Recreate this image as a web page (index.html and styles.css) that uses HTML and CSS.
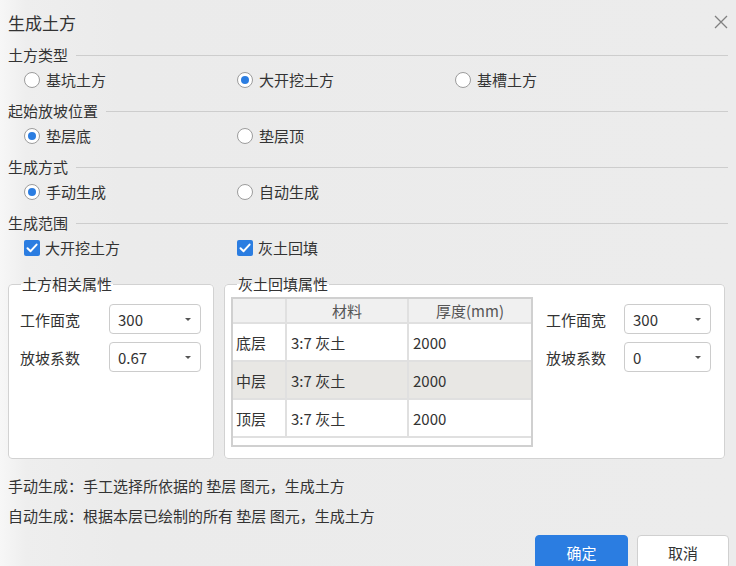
FILE: index.html
```html
<!DOCTYPE html>
<html lang="zh-CN">
<head>
<meta charset="utf-8">
<title>生成土方</title>
<link rel="stylesheet" href="styles.css">
</head>
<body>
<div class="dialog">
  <div class="titlebar">
    <span class="title">生成土方</span>
    <svg class="close" width="14" height="14" viewBox="0 0 14 14"><path d="M1 1 L13 13 M13 1 L1 13" stroke="#808080" stroke-width="1.3" fill="none"/></svg>
  </div>

  <section class="sec">
    <div class="sec-head"><span>土方类型</span><i class="rule"></i></div>
    <div class="opts">
      <label class="opt"><span class="radio"></span>基坑土方</label>
      <label class="opt"><span class="radio on"></span>大开挖土方</label>
      <label class="opt"><span class="radio"></span>基槽土方</label>
    </div>
  </section>

  <section class="sec">
    <div class="sec-head"><span>起始放坡位置</span><i class="rule"></i></div>
    <div class="opts">
      <label class="opt"><span class="radio on"></span>垫层底</label>
      <label class="opt"><span class="radio"></span>垫层顶</label>
    </div>
  </section>

  <section class="sec">
    <div class="sec-head"><span>生成方式</span><i class="rule"></i></div>
    <div class="opts">
      <label class="opt"><span class="radio on"></span>手动生成</label>
      <label class="opt"><span class="radio"></span>自动生成</label>
    </div>
  </section>

  <section class="sec">
    <div class="sec-head"><span>生成范围</span><i class="rule"></i></div>
    <div class="opts">
      <label class="opt opt-chk"><span class="check"><svg width="16" height="16" viewBox="0 0 16 16"><path d="M3.5 8.2 L6.6 11.2 L12.6 4.6" stroke="#fff" stroke-width="2" fill="none" stroke-linecap="round" stroke-linejoin="round"/></svg></span>大开挖土方</label>
      <label class="opt opt-chk"><span class="check"><svg width="16" height="16" viewBox="0 0 16 16"><path d="M3.5 8.2 L6.6 11.2 L12.6 4.6" stroke="#fff" stroke-width="2" fill="none" stroke-linecap="round" stroke-linejoin="round"/></svg></span>灰土回填</label>
    </div>
  </section>

  <div class="groups">
    <fieldset class="grp grp-left">
      <legend>土方相关属性</legend>
      <div class="grp-body left-body">
        <div class="props">
          <div class="prop"><span class="plabel">工作面宽</span><div class="combo"><span>300</span><i class="caret"></i></div></div>
          <div class="prop"><span class="plabel">放坡系数</span><div class="combo"><span>0.67</span><i class="caret"></i></div></div>
        </div>
      </div>
    </fieldset>
    <fieldset class="grp grp-right">
      <legend>灰土回填属性</legend>
      <div class="grp-body right-body">
        <div class="tbl-wrap">
          <table class="tbl">
            <tr class="thead"><th class="c1"></th><th class="c2">材料</th><th class="c3">厚度(mm)</th></tr>
            <tr class="row"><td class="c1">底层</td><td class="c2">3:7 灰土</td><td class="c3">2000</td></tr>
            <tr class="row alt"><td class="c1">中层</td><td class="c2">3:7 灰土</td><td class="c3">2000</td></tr>
            <tr class="row"><td class="c1">顶层</td><td class="c2">3:7 灰土</td><td class="c3">2000</td></tr>
          </table>
        </div>
        <div class="props props-right">
          <div class="prop"><span class="plabel">工作面宽</span><div class="combo"><span>300</span><i class="caret"></i></div></div>
          <div class="prop"><span class="plabel">放坡系数</span><div class="combo"><span>0</span><i class="caret"></i></div></div>
        </div>
      </div>
    </fieldset>
  </div>

  <p class="note">手动生成：手工选择所依据的 垫层 图元，生成土方</p>
  <p class="note">自动生成：根据本层已绘制的所有 垫层 图元，生成土方</p>

  <div class="actions">
    <button class="btn primary">确定</button>
    <button class="btn">取消</button>
  </div>
</div>
</body>
</html>
```

FILE: styles.css
```css
* { box-sizing: border-box; }

html, body {
  margin: 0;
  padding: 0;
}

body {
  width: 736px;
  height: 566px;
  overflow: hidden;
  background: linear-gradient(90deg, #f7f7f7 0px, #eeeeee 26px, #ebebeb 120px, #ececec 100%);
  font-family: "Noto Sans CJK SC", "Noto Sans", sans-serif;
  font-size: 15px;
  color: #333;
}

.dialog {
  width: 736px;
}

.titlebar {
  height: 44px;
  padding: 0 8px;
  display: flex;
  align-items: center;
  justify-content: space-between;
}

.title {
  font-size: 17px;
  color: #333;
}

.close {
  display: block;
}

.sec {
  height: 56px;
}

.sec-head {
  height: 22px;
  margin: 0 8px;
  display: flex;
  align-items: center;
  line-height: 22px;
}

.rule {
  flex: 1;
  height: 1px;
  background: #cdcdcd;
  margin-left: 8px;
}

.opts {
  height: 28px;
  padding-left: 24px;
  display: grid;
  grid-template-columns: 213px 218px auto;
  align-items: center;
}

.opt {
  display: flex;
  align-items: center;
  line-height: 20px;
}

.radio {
  width: 16px;
  height: 16px;
  border-radius: 50%;
  border: 1px solid #9c9c9c;
  background: #fff;
  margin-right: 6px;
  display: flex;
  align-items: center;
  justify-content: center;
}

.radio.on::after {
  content: "";
  width: 8px;
  height: 8px;
  border-radius: 50%;
  background: #2b7de1;
}

.check {
  width: 16px;
  height: 16px;
  border-radius: 2px;
  background: #2b7de1;
  margin-right: 5px;
  display: block;
}

.check svg {
  display: block;
}

.groups {
  margin-top: 6px;
  height: 185px;
  padding-left: 8px;
  display: flex;
  gap: 10px;
}

.grp {
  margin: 0;
  padding: 0;
  border: 1px solid #d2d2d2;
  border-radius: 4px;
  background: #fff;
  min-width: 0;
}

.grp legend {
  font-size: 15px;
  line-height: 20px;
  margin-left: 12px;
  padding: 0 1px;
  color: #333;
}

.grp-left {
  width: 206px;
}

.grp-right {
  width: 501px;
}

.left-body {
  padding: 10px 12px 0 11px;
}

.right-body {
  padding: 3px 13px 0 6px;
  display: flex;
  align-items: flex-start;
}

.props {
  display: flex;
  flex-direction: column;
  gap: 8px;
}

.props-right {
  margin-left: 13px;
  padding-top: 7px;
}

.prop {
  display: flex;
  align-items: center;
  height: 30px;
}

.plabel {
  width: 89px;
}

.props-right .plabel {
  width: 78px;
}

.combo {
  width: 92px;
  height: 30px;
  border: 1px solid #cccccc;
  border-radius: 4px;
  background: #fff;
  display: flex;
  align-items: center;
  justify-content: space-between;
  padding: 0 9px 0 8px;
}

.props-right .combo {
  width: 87px;
}

.caret {
  width: 0;
  height: 0;
  border-left: 3px solid transparent;
  border-right: 3px solid transparent;
  border-top: 3px solid #555;
}

.tbl-wrap {
  width: 302px;
  height: 150px;
  border: 2px solid #d0d0d0;
  background: #fff;
}

.tbl {
  width: 100%;
  border-collapse: separate;
  border-spacing: 0;
  font-size: 15px;
}

.tbl th,
.tbl td {
  padding: 0 0 0 4px;
  border-right: 2px solid #e0e0e0;
  border-bottom: 2px solid #e0e0e0;
  text-align: left;
  font-weight: normal;
  white-space: nowrap;
}

.tbl .c3 {
  border-right: none;
}

.tbl .c1 {
  width: 54px;
  padding-left: 3px;
}

.tbl .c2 {
  width: 122px;
}

.tbl .thead th {
  height: 25px;
  background: #f0f0f0;
  color: #555;
  text-align: center;
  padding: 0;
}

.tbl .row td {
  height: 38px;
}

.tbl .row.alt td {
  background: #e8e7e4;
}

.note {
  margin: 12px 8px 0;
  line-height: 30px;
  height: 30px;
}

.note + .note {
  margin-top: 0;
}

.actions {
  margin-top: 4px;
  display: flex;
  justify-content: flex-end;
  gap: 9px;
  padding-right: 7px;
}

.btn {
  width: 92px;
  height: 34px;
  border: 1px solid #d0d0d0;
  border-radius: 4px;
  background: #fff;
  color: #333;
  font-family: "Noto Sans CJK SC", "Noto Sans", sans-serif;
  font-size: 15px;
  padding: 0;
}

.btn.primary {
  width: 93px;
  background: #2b7de1;
  border-color: #2b7de1;
  color: #fff;
}
```
